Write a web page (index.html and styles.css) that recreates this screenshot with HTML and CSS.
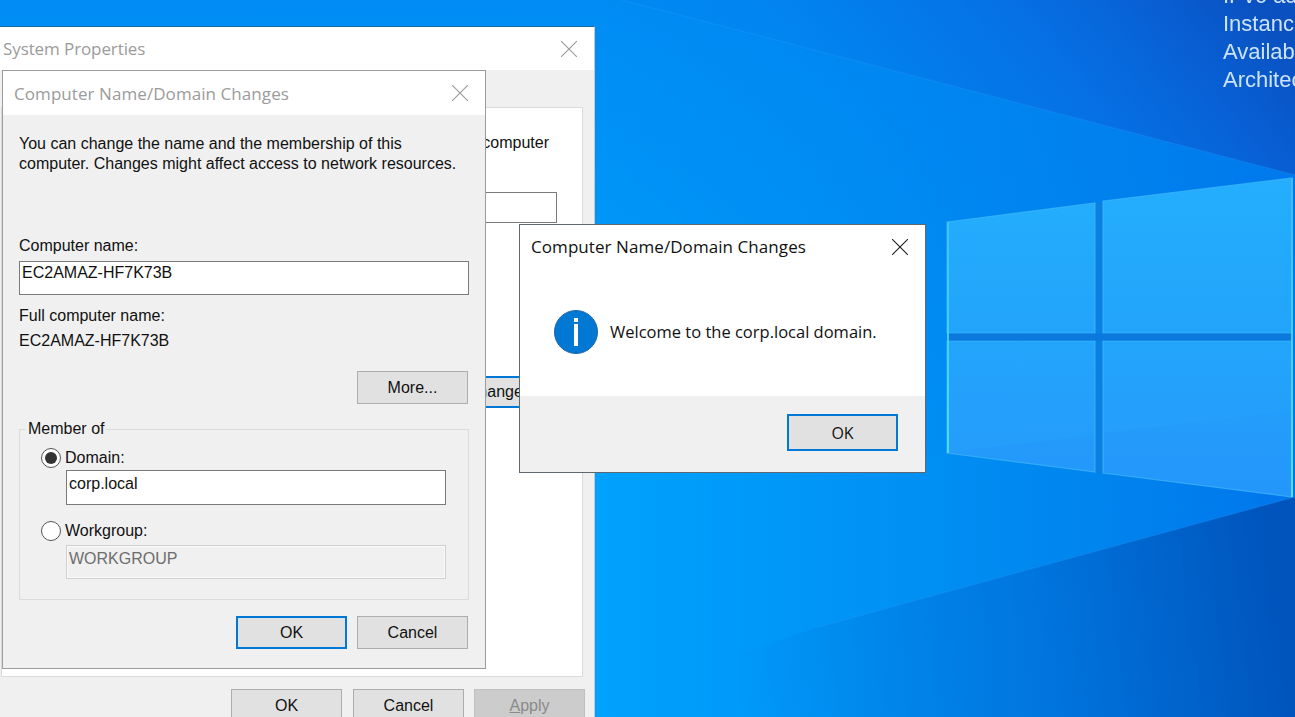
FILE: index.html
```html
<!DOCTYPE html>
<html lang="en">
<head>
<meta charset="utf-8">
<title>Computer Name/Domain Changes</title>
<link rel="stylesheet" href="styles.css">
</head>
<body>
<main class="desktop">
  <svg class="logo" width="1295" height="717" viewBox="0 0 1295 717" aria-hidden="true">
    <defs>
      <linearGradient id="pane" x1="0" y1="178" x2="0" y2="497" gradientUnits="userSpaceOnUse">
        <stop offset="0" stop-color="#24aefd"/>
        <stop offset=".4" stop-color="#22a6fb"/>
        <stop offset="1" stop-color="#2496fb"/>
      </linearGradient>
      <linearGradient id="edge" x1="0" y1="178" x2="0" y2="497" gradientUnits="userSpaceOnUse">
        <stop offset="0" stop-color="#45bdf8"/>
        <stop offset=".4" stop-color="#3fd4f6"/>
        <stop offset="1" stop-color="#55e8f4"/>
      </linearGradient>
      <linearGradient id="beam-top" x1="850" y1="120" x2="1150" y2="-130" gradientUnits="userSpaceOnUse">
        <stop offset="0" stop-color="#0a66e0" stop-opacity=".08"/>
        <stop offset=".5" stop-color="#0a62dc" stop-opacity=".55"/>
        <stop offset="1" stop-color="#0a50c0" stop-opacity="1"/>
      </linearGradient>
      <linearGradient id="beam-low" x1="740" y1="717" x2="1290" y2="640" gradientUnits="userSpaceOnUse">
        <stop offset="0" stop-color="#0060c8" stop-opacity="0"/>
        <stop offset=".55" stop-color="#0060c8" stop-opacity=".45"/>
        <stop offset="1" stop-color="#0052b8" stop-opacity=".95"/>
      </linearGradient>
    </defs>
    <polygon class="beam-top" points="622,0 1295,175 1295,0"/>
    <polygon class="beam-low" points="1295,497 818,627 560,717 1295,717"/>
    <line class="beam-line" x1="622" y1="0" x2="1295" y2="175"/>
    <line class="beam-line" x1="1295" y1="497" x2="818" y2="627"/>
    <rect class="gap" x="1095" y="203" width="8" height="270"/>
    <rect class="gap gap-dark" x="947" y="333" width="345" height="8"/>
    <polygon class="pane" points="947,222 1095,203 1095,333 947,333"/>
    <polygon class="pane" points="1103,201 1292,178 1292,333 1103,333"/>
    <polygon class="pane" points="947,341 1095,341 1095,472 947,453"/>
    <polygon class="pane" points="1103,341 1292,341 1292,497 1103,473"/>
    <polygon class="sheen" points="947,453 1095,435 1095,341 947,341"/>
    <polygon class="sheen" points="1103,433 1292,411 1292,341 1103,341"/>
    <line class="glow" x1="948" y1="222" x2="948" y2="453"/>
    <line class="glow" x1="1292" y1="178" x2="1292" y2="497"/>
  </svg>

  <div class="corner-text">
    <div>IPv6 address</div>
    <div>Instance size</div>
    <div>Availability Zone</div>
    <div>Architecture</div>
  </div>

  <section class="window sys">
    <header class="titlebar sys-title">
      <span class="title-text muted sys-name">System Properties</span>
      <svg class="close-x" width="16" height="16" viewBox="0 0 16 16"><path class="x-muted" d="M0 0 16 16M16 0 0 16"/></svg>
    </header>
    <div class="panel">
      <p class="panel-line">computer</p>
      <div class="field description"></div>
      <div class="panel-action"><div class="btn btn-default">Change...</div></div>
    </div>
    <div class="btn-row sys-actions">
      <div class="btn sys-ok">OK</div>
      <div class="btn">Cancel</div>
      <div class="btn btn-disabled"><u>A</u>pply</div>
    </div>
  </section>

  <section class="window domain">
    <header class="titlebar domain-title">
      <span class="title-text muted">Computer Name/Domain Changes</span>
      <svg class="close-x" width="16" height="16" viewBox="0 0 16 16"><path class="x-muted" d="M0 0 16 16M16 0 0 16"/></svg>
    </header>
    <div class="domain-body">
      <p class="intro">You can change the name and the membership of this<br>computer. Changes might affect access to network resources.</p>
      <div class="label name-label">Computer name:</div>
      <div class="field name-field">EC2AMAZ-HF7K73B</div>
      <div class="label full-label">Full computer name:</div>
      <div class="label full-value">EC2AMAZ-HF7K73B</div>
      <div class="more-row"><div class="btn">More...</div></div>
      <fieldset class="group">
        <legend>Member of</legend>
        <div class="radio-row first-radio"><span class="radio radio-on"></span>Domain:</div>
        <div class="field sub-field domain-input">corp.local</div>
        <div class="radio-row second-radio"><span class="radio"></span>Workgroup:</div>
        <div class="field sub-field field-disabled">WORKGROUP</div>
      </fieldset>
      <div class="btn-row domain-actions">
        <div class="btn btn-default">OK</div>
        <div class="btn">Cancel</div>
      </div>
    </div>
  </section>

  <section class="window message">
    <header class="titlebar msg-title">
      <span class="title-text">Computer Name/Domain Changes</span>
      <svg class="close-x" width="16" height="16" viewBox="0 0 16 16"><path class="x-dark" d="M0 0 16 16M16 0 0 16"/></svg>
    </header>
    <div class="msg-content">
      <svg class="info" width="44" height="44" viewBox="0 0 44 44">
        <circle class="info-disc" cx="22" cy="22" r="21.5"/>
        <rect class="info-mark" x="20" y="8" width="4" height="4"/>
        <rect class="info-mark" x="20" y="14" width="4" height="22"/>
      </svg>
      <span class="msg-text">Welcome to the corp.local domain.</span>
    </div>
    <footer class="msg-footer">
      <div class="btn btn-default msg-ok">OK</div>
    </footer>
  </section>
</main>
</body>
</html>
```
FILE: styles.css
```css
* { box-sizing: border-box; }
html, body { margin: 0; height: 100%; overflow: hidden; }
body { font-family: "Liberation Sans", Arial, sans-serif; font-size: 16px; line-height: 20px; color: #111; }
p { margin: 0; }

.desktop {
  position: relative;
  width: 1295px;
  height: 717px;
  overflow: hidden;
  background:
    linear-gradient(180deg, rgba(0,125,238,.6) 0%, rgba(0,125,238,0) 65%),
    linear-gradient(90deg, #00a2fd 46%, #0094f6 65%, #0084ee 85%, #0076ec 100%);
}
.logo { position: absolute; left: 0; top: 0; }
.beam-top { fill: url(#beam-top); }
.beam-low { fill: url(#beam-low); }
.beam-line { stroke: #3fa8ff; stroke-width: 1.5; opacity: .15; }
.gap { fill: #0a80e2; }
.gap-dark { fill: #0a78dd; }
.pane { fill: url(#pane); stroke: #48c0f8; stroke-width: 1.2; stroke-opacity: .6; }
.sheen { fill: #2ab0ff; opacity: .16; }
.glow { stroke: url(#edge); stroke-width: 2; opacity: .9; }

.corner-text {
  position: absolute;
  left: 1223px;
  top: -18px;
  width: 200px;
  font-size: 22px;
  line-height: 28px;
  color: #cde3f8;
  white-space: nowrap;
  filter: blur(.5px);
}

.window { position: absolute; background: #f0f0f0; display: flex; flex-direction: column; }
.sys { left: -1px; top: 26px; width: 596px; height: 740px; border: 1px solid #c8c8c8; border-top-color: #17699f; }
.domain { left: 2px; top: 70px; width: 484px; height: 599px; border: 1px solid #9c9c9c; }
.message { left: 519px; top: 224px; width: 407px; height: 249px; border: 1px solid #5f6770; background: #fff; }

.titlebar { background: #fff; display: flex; align-items: center; justify-content: space-between; flex: none; }
.title-text { font-family: "Open Sans", sans-serif; font-size: 17px; line-height: 22px; letter-spacing: .07px; white-space: nowrap; }
.sys-name { letter-spacing: -.1px; }
.muted { color: #9b9b9b; }
.close-x { flex: none; }
.x-muted, .x-dark { fill: none; stroke-width: 1.1; }
.x-muted { stroke: #9a9a9a; }
.x-dark { stroke: #1e1e1e; }
.sys-title { height: 43px; padding: 0 17px 0 3px; }
.domain-title { height: 44px; padding: 2px 17px 0 11px; }
.domain-title .close-x { margin-top: -2px; }
.msg-title { height: 43px; padding: 0 17px 0 11px; }

.panel { margin: 37px 0 0 1px; width: 582px; height: 570px; background: #fff; border: 1px solid #dadada; padding: 25px 25px 0 0; display: flex; flex-direction: column; align-items: flex-end; flex: none; }
.panel-line { white-space: nowrap; margin-right: 8px; }
.description { width: 430px; height: 31px; margin-top: 39px; }
.panel-action { margin-top: 153px; }

.btn { width: 111px; height: 33px; background: #e1e1e1; border: 1px solid #adadad; display: flex; align-items: center; justify-content: center; flex: none; }
.btn-default { border: 2px solid #0078d7; }
.btn-disabled { background: #cccccc; border-color: #bfbfbf; color: #8a8a8a; }
.panel-action .btn { height: 32px; }

.btn-row { display: flex; justify-content: flex-end; gap: 10px; }
.sys-actions { margin-top: 12px; padding-right: 9px; }
.sys-ok { margin-right: 1px; }

.domain-body { padding: 19px 0 0 16px; flex: 1; }
.name-label { margin-top: 62px; }
.field { background: #fff; border: 1px solid #7a7a7a; white-space: nowrap; }
.name-field { width: 450px; height: 34px; margin-top: 5px; padding: 1px 0 0 2px; }
.full-label { margin-top: 11px; }
.full-value { margin-top: 5px; }
.more-row { display: flex; justify-content: flex-end; width: 449px; margin-top: 20px; }

.group { width: 450px; margin: 15px 0 0; padding: 0 0 20px; border: 1px solid #dcdcdc; min-width: 0; }
.group legend { margin-left: 6px; padding: 0 2px; line-height: 20px; }
.radio-row { display: flex; align-items: center; gap: 4px; margin-left: 21px; height: 20px; }
.first-radio { margin-top: 9px; }
.second-radio { margin-top: 16px; }
.radio { width: 20px; height: 20px; border-radius: 50%; border: 1px solid #555; background: #fff; display: flex; align-items: center; justify-content: center; flex: none; }
.radio-on::after { content: ""; width: 12px; height: 12px; border-radius: 50%; background: #333; }
.sub-field { width: 380px; margin-left: 46px; padding: 3px 0 0 2px; }
.domain-input { height: 35px; margin-top: 2px; }
.field-disabled { height: 34px; margin-top: 4px; background: #f0f0f0; border-color: #cfcfcf; color: #6d6d6d; box-shadow: inset 0 0 0 1px #fafafa; }

.domain-actions { width: 449px; margin-top: 16px; }

.msg-content { height: 128px; padding-left: 34px; display: flex; align-items: center; gap: 12px; flex: none; }
.info { flex: none; }
.info-disc { fill: #0078d4; stroke: #1b66a8; stroke-width: 1; }
.info-mark { fill: #fff; }
.msg-text { font-family: "Open Sans", sans-serif; font-size: 16.5px; line-height: 22px; }
.msg-footer { flex: 1; background: #f0f0f0; padding: 18px 27px 0 0; display: flex; justify-content: flex-end; align-items: flex-start; }
.msg-ok { height: 37px; font-family: "Open Sans", sans-serif; }
```
